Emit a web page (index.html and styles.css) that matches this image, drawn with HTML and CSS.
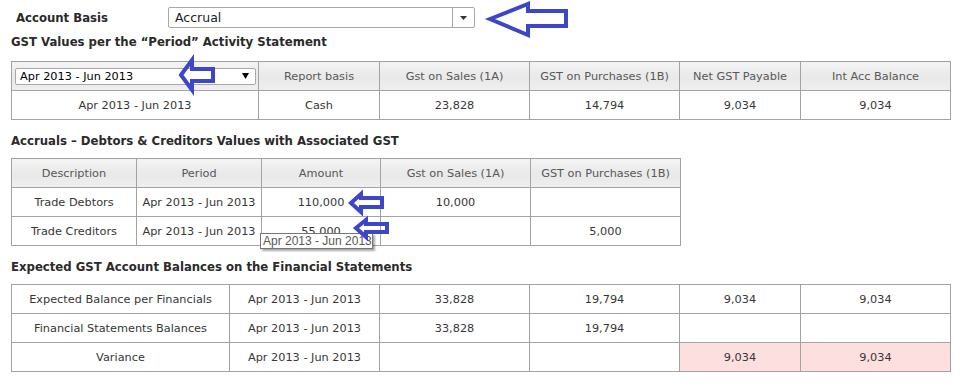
FILE: index.html
```html
<!DOCTYPE html>
<html>
<head>
<meta charset="utf-8">
<link rel="stylesheet" href="styles.css">
</head>
<body>
<div class="page">
  <div class="basis-row">
    <span class="basis-label">Account Basis</span>
    <div class="combo">
      <span class="combo-text">Accrual</span>
      <span class="combo-btn"><svg width="7" height="4" viewBox="0 0 7 4"><polygon points="0,0 7,0 3.5,4" fill="#333"/></svg></span>
    </div>
  </div>

  <h2 class="section-title first">GST Values per the “Period” Activity Statement</h2>
  <table class="grid grid-wide">
    <colgroup>
      <col class="c247"><col class="c121"><col class="c150"><col class="c150"><col class="c121"><col class="c150">
    </colgroup>
    <thead>
      <tr>
        <th class="select-cell">
          <div class="period-select">
            <span>Apr 2013 - Jun 2013</span>
            <svg width="7" height="6" viewBox="0 0 7 6"><polygon points="0,0 7,0 3.5,6" fill="#000"/></svg>
          </div>
        </th>
        <th>Report basis</th>
        <th>Gst on Sales (1A)</th>
        <th>GST on Purchases (1B)</th>
        <th>Net GST Payable</th>
        <th>Int Acc Balance</th>
      </tr>
    </thead>
    <tbody>
      <tr>
        <td>Apr 2013 - Jun 2013</td>
        <td>Cash</td>
        <td>23,828</td>
        <td>14,794</td>
        <td>9,034</td>
        <td>9,034</td>
      </tr>
    </tbody>
  </table>

  <h2 class="section-title">Accruals – Debtors &amp; Creditors Values with Associated GST</h2>
  <table class="grid grid-accruals">
    <colgroup>
      <col class="c125"><col class="c125"><col class="c119"><col class="c150"><col class="c150">
    </colgroup>
    <thead>
      <tr>
        <th>Description</th>
        <th>Period</th>
        <th>Amount</th>
        <th>Gst on Sales (1A)</th>
        <th>GST on Purchases (1B)</th>
      </tr>
    </thead>
    <tbody>
      <tr>
        <td>Trade Debtors</td>
        <td>Apr 2013 - Jun 2013</td>
        <td>110,000</td>
        <td>10,000</td>
        <td></td>
      </tr>
      <tr>
        <td>Trade Creditors</td>
        <td>Apr 2013 - Jun 2013</td>
        <td>55,000</td>
        <td></td>
        <td>5,000</td>
      </tr>
    </tbody>
  </table>

  <h2 class="section-title">Expected GST Account Balances on the Financial Statements</h2>
  <table class="grid grid-wide">
    <colgroup>
      <col class="c218"><col class="c150"><col class="c150"><col class="c150"><col class="c121"><col class="c150">
    </colgroup>
    <tbody>
      <tr>
        <td>Expected Balance per Financials</td>
        <td>Apr 2013 - Jun 2013</td>
        <td>33,828</td>
        <td>19,794</td>
        <td>9,034</td>
        <td>9,034</td>
      </tr>
      <tr>
        <td>Financial Statements Balances</td>
        <td>Apr 2013 - Jun 2013</td>
        <td>33,828</td>
        <td>19,794</td>
        <td></td>
        <td></td>
      </tr>
      <tr>
        <td>Variance</td>
        <td>Apr 2013 - Jun 2013</td>
        <td></td>
        <td></td>
        <td class="alert">9,034</td>
        <td class="alert">9,034</td>
      </tr>
    </tbody>
  </table>

  <div class="tooltip">Apr 2013 - Jun 2013</div>

  <svg class="annotations" width="970" height="387" viewBox="0 0 970 387">
    <g fill="none" stroke="#3d45c8" stroke-width="4" stroke-linejoin="miter">
      <polygon points="490,19 528,4 528,11 566,11 566,26 528,26 528,35"/>
      <polygon points="181,75 192,60 192,69 213,69 213,81 192,81 192,90"/>
      <polygon points="351,203 361,194 361,198 382,198 382,207 361,207 361,212"/>
      <polygon points="356,228 366,220 366,224 387,224 387,232 366,232 366,237"/>
    </g>
  </svg>
</div>
</body>
</html>
```

FILE: styles.css
```css
html, body {
  margin: 0;
  padding: 0;
  background: #ffffff;
}

.page {
  position: relative;
  width: 970px;
  height: 387px;
  box-sizing: border-box;
  padding: 7px 0 0 11px;
  overflow: hidden;
  font-family: "DejaVu Sans", Verdana, sans-serif;
  font-size: 11.3px;
  color: #363636;
}

.basis-row {
  display: flex;
  align-items: center;
  height: 21px;
}

.basis-label {
  width: 152px;
  margin-left: 5px;
  font-family: "DejaVu Sans Condensed", "DejaVu Sans", sans-serif;
  font-weight: bold;
  font-size: 13px;
  color: #2a2a2a;
}

.combo {
  display: flex;
  width: 307px;
  height: 21px;
  box-sizing: border-box;
  border: 1px solid #a8a8a8;
  border-radius: 2px;
  background: #fff;
}

.combo-text {
  flex: 1;
  padding-left: 6px;
  line-height: 20px;
  font-size: 12.5px;
  color: #222;
}

.combo-btn {
  width: 21px;
  border-left: 1px solid #a8a8a8;
  display: flex;
  align-items: center;
  justify-content: center;
}

.section-title {
  margin: 13px 0 9px 0;
  font-family: "DejaVu Sans Condensed", "DejaVu Sans", sans-serif;
  font-weight: bold;
  font-size: 13px;
  line-height: 16px;
  color: #2a2a2a;
}

.section-title.first {
  margin-top: 6px;
  margin-bottom: 11px;
}

.grid {
  border-collapse: collapse;
  table-layout: fixed;
}

.grid-wide { width: 940px; }
.grid-accruals { width: 670px; }

.c247 { width: 247px; }
.c121 { width: 121px; }
.c150 { width: 150px; }
.c125 { width: 125px; }
.c119 { width: 119px; }
.c218 { width: 218px; }

.grid th,
.grid td {
  border: 1px solid #a3a3a3;
  height: 28px;
  padding: 0;
  text-align: center;
  vertical-align: middle;
  white-space: nowrap;
  overflow: hidden;
}

.grid th {
  font-weight: normal;
  color: #585858;
  background: linear-gradient(to bottom, #f4f4f4 0%, #ebebeb 40%, #e9e9e9 60%, #efefef 100%);
}

.grid td {
  color: #363636;
  background: #fff;
}

.grid td.alert {
  background: #fddfe0;
}

.grid th.select-cell {
  padding: 0 2px 0 3px;
  text-align: left;
}

.period-select {
  display: flex;
  align-items: center;
  justify-content: space-between;
  height: 17px;
  box-sizing: border-box;
  border: 1px solid #a9a9a9;
  border-radius: 2px;
  background: #fff;
  padding: 0 6px 0 4px;
  color: #000;
}

.tooltip {
  position: absolute;
  left: 260px;
  top: 233px;
  width: 113px;
  height: 16px;
  box-sizing: border-box;
  border: 1px solid #767676;
  background: #fff;
  box-shadow: 2px 2px 2px rgba(0, 0, 0, 0.35);
  font-family: "Liberation Sans", Arial, sans-serif;
  font-size: 12px;
  line-height: 14px;
  padding-left: 2px;
  color: #575757;
  white-space: nowrap;
}

.annotations {
  position: absolute;
  left: 0;
  top: 0;
  pointer-events: none;
}
```
